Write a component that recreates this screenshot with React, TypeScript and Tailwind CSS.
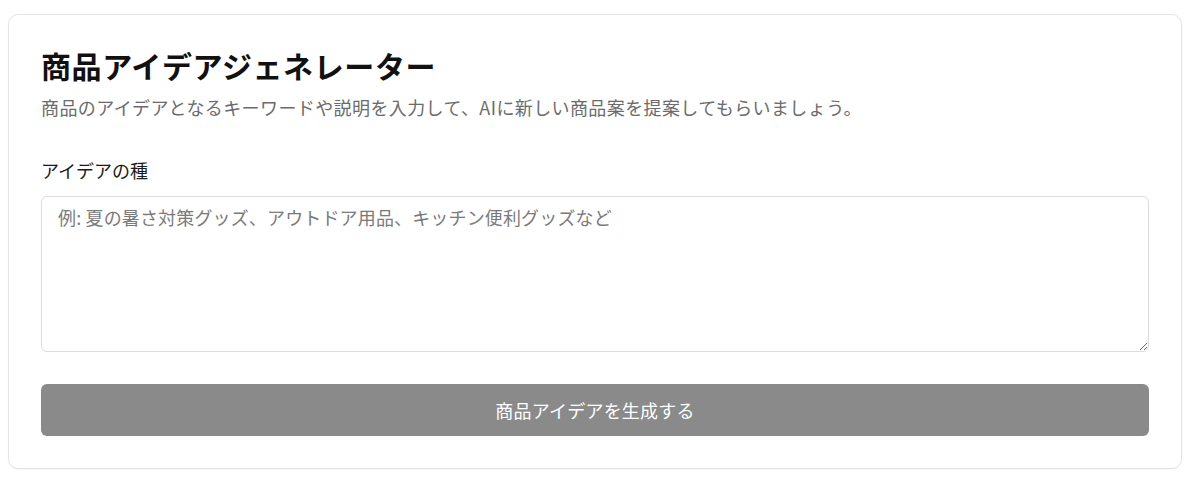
import React from "react";

export default function App() {
  const font = {
    fontFamily: '"Noto Sans CJK JP", "Noto Sans", sans-serif',
  };
  return (
    <div className="min-h-[481px] bg-white pt-[14px] pl-[8px]" style={font}>
      <div className="w-[1174px] rounded-[10px] border border-[#e4e4e7] bg-white p-8 shadow-[0_1px_2px_rgba(0,0,0,0.04)]">
        <h1 className="text-[30px] font-bold leading-[36px] tracking-[0.6px] text-[#111111]">
          商品アイデアジェネレーター
        </h1>
        <p className="mt-[10px] text-[18px] leading-[28px] tracking-[0.4px] text-[#6b6b6b]">
          商品のアイデアとなるキーワードや説明を入力して、AIに新しい商品案を提案してもらいましょう。
        </p>
        <div className="mt-[35px] text-[18px] leading-[28px] text-[#1a1a1a]">
          アイデアの種
        </div>
        <textarea
          className="mt-[12px] block h-[156px] w-full resize-y rounded-[6px] border border-[#dcdcdc] px-4 pt-[7px] text-[18px] leading-[27px] tracking-[0.15px] text-[#111] placeholder:text-[#7a7a7a] focus:outline-none"
          placeholder="例: 夏の暑さ対策グッズ、アウトドア用品、キッチン便利グッズなど"
          style={font}
        />
        <button
          className="mt-8 flex h-[52px] w-full items-center justify-center rounded-[6px] bg-[#8a8a8a] text-[18px] tracking-[0.2px] text-white"
          style={font}
        >
          商品アイデアを生成する
        </button>
      </div>
    </div>
  );
}
